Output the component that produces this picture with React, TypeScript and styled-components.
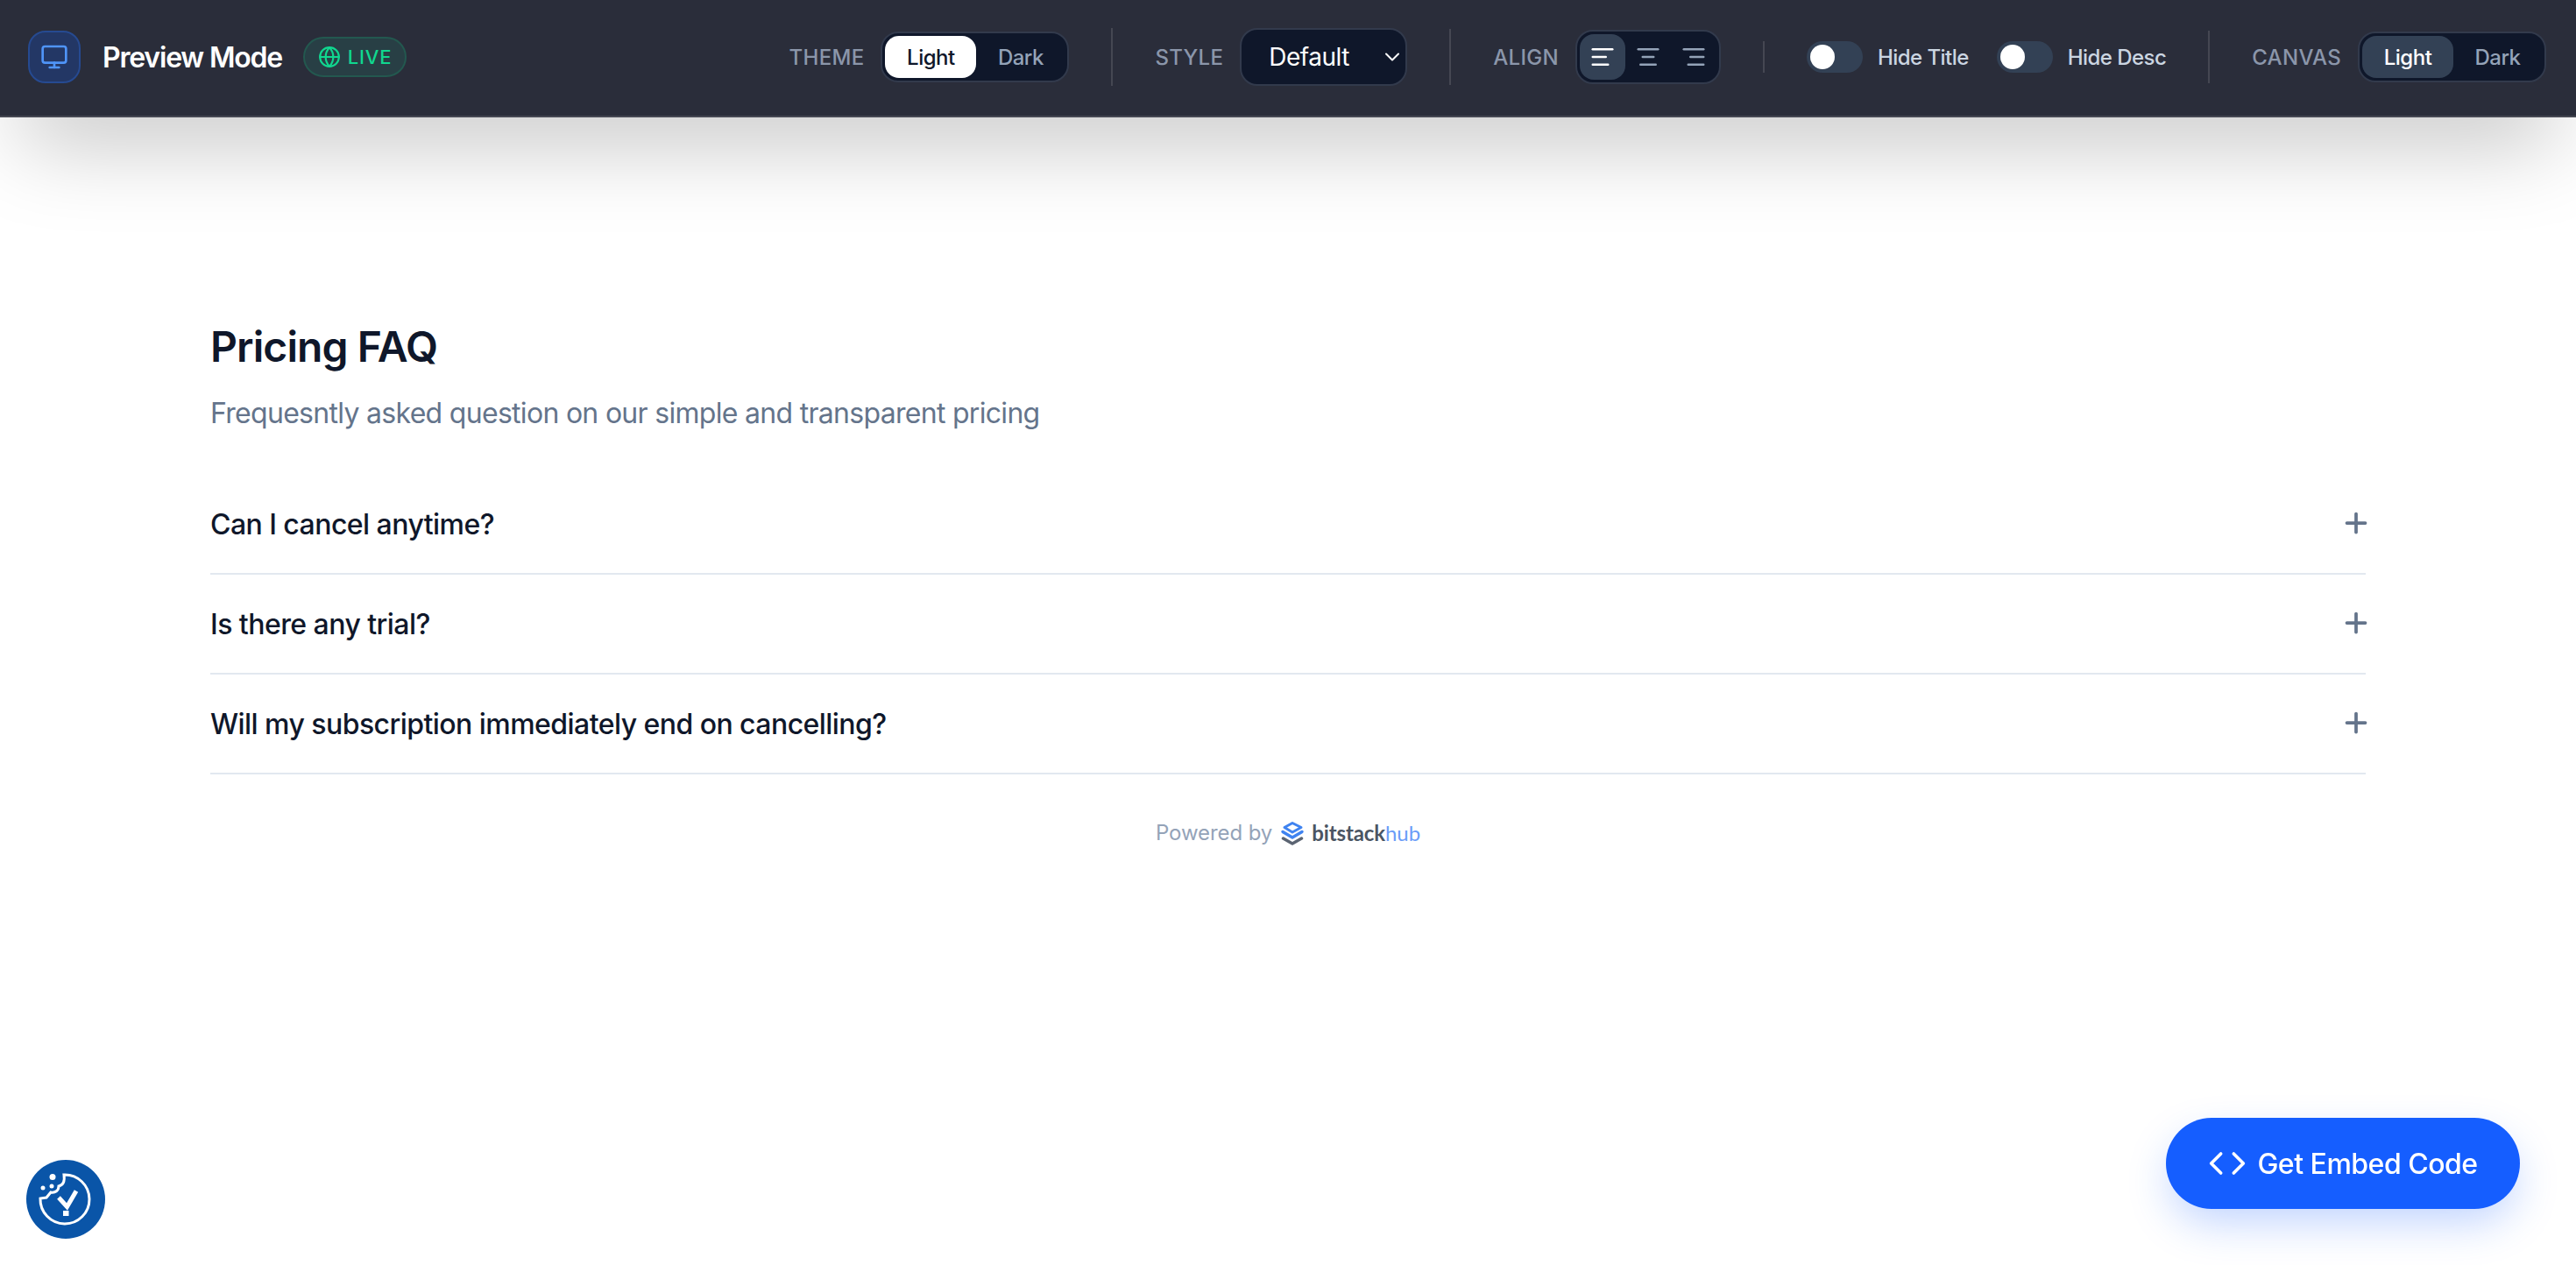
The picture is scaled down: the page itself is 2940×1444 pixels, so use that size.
import React from "react";
import styled, { createGlobalStyle } from "styled-components";
import { AlignCenter, AlignLeft, AlignRight, ChevronDown, Code, Globe, Monitor, Plus } from "lucide-react";

const Global = createGlobalStyle`
  * { box-sizing: border-box; }
  html, body { margin: 0; padding: 0; background: #fff; }
  body { font-family: Inter, "Liberation Sans", sans-serif; overflow: hidden; }
`;

const Page = styled.div`
  min-height: 1444px;
  display: flex;
  flex-direction: column;
  background: #fff;
`;

const Header = styled.header`
  height: 134px;
  flex: none;
  display: flex;
  align-items: center;
  justify-content: space-between;
  padding: 0 34px 2px 32px;
  background: #2a2d3a;
  border-bottom: 2px solid #454752;
  box-shadow: 0 50px 100px -24px rgba(0, 0, 0, 0.25);
`;

const Brand = styled.div`
  display: flex;
  align-items: center;
`;

const BrandIcon = styled.div`
  width: 60px;
  height: 60px;
  border-radius: 20px;
  background: #233765;
  border: 2px solid #264a91;
  display: flex;
  align-items: center;
  justify-content: center;
  color: #4f94f8;
  margin-right: 25px;
`;

const BrandTitle = styled.h1`
  margin: 0 24px 0 0;
  font-size: 32px;
  font-weight: 600;
  letter-spacing: -1.2px;
  color: #fff;
`;

const LiveBadge = styled.div`
  height: 46px;
  width: 118px;
  display: flex;
  align-items: center;
  justify-content: center;
  gap: 8px;
  border-radius: 23px;
  background: #283f45;
  border: 2px solid #23584f;
  color: #10d78f;
  font-size: 22px;
  font-weight: 500;
  letter-spacing: 0.8px;
`;

const Controls = styled.div`
  display: flex;
  align-items: center;
  gap: 48px;
`;

const Group = styled.div`
  display: flex;
  align-items: center;
  gap: 19px;
`;

const Divider = styled.div<{ $h: number }>`
  width: 2px;
  height: ${(p) => p.$h}px;
  background: #454752;
`;

const Label = styled.span`
  font-size: 24px;
  font-weight: 500;
  letter-spacing: 0.3px;
  color: #8b96aa;
  text-transform: uppercase;
`;

const Segmented = styled.div`
  display: flex;
  padding: 3px;
  border-radius: 20px;
  background: #0f172a;
  border: 2px solid #323a4c;
`;

const SegButton = styled.button<{ $active: "white" | "slate" | false; $w: number; $h: number }>`
  width: ${(p) => p.$w}px;
  height: ${(p) => p.$h}px;
  padding: 0;
  border: 0;
  border-radius: 16px;
  display: flex;
  align-items: center;
  justify-content: center;
  font: 500 24px Inter, sans-serif;
  letter-spacing: -0.5px;
  background: ${(p) => (p.$active === "white" ? "#fff" : p.$active === "slate" ? "#334155" : "transparent")};
  color: ${(p) => (p.$active === "white" ? "#0f172a" : p.$active === "slate" ? "#fff" : "#94a3b8")};
`;

const SelectBox = styled.div`
  width: 191px;
  height: 66px;
  border-radius: 20px;
  background: #0f172a;
  border: 2px solid #323a4c;
  display: flex;
  align-items: center;
  justify-content: space-between;
  padding: 0 1px 0 31px;
  color: #fff;
  font-size: 28px;
  letter-spacing: -0.5px;
`;

const ToggleGroup = styled.div`
  display: flex;
  align-items: center;
  gap: 32px;
`;

const ToggleItem = styled.div`
  display: flex;
  align-items: center;
  gap: 17px;
`;

const Track = styled.div`
  width: 64px;
  height: 36px;
  border-radius: 18px;
  background: #334155;
  display: flex;
  align-items: center;
  padding: 0 4px;
`;

const Knob = styled.div`
  width: 28px;
  height: 28px;
  border-radius: 50%;
  background: #fff;
`;

const ToggleText = styled.span`
  font-size: 24px;
  font-weight: 500;
  letter-spacing: -0.55px;
  color: #cbd5e1;
`;

const Main = styled.main`
  flex: 1;
  padding: 232px 240px 0;
`;

const Title = styled.h2`
  margin: 0;
  font-size: 48px;
  line-height: 60px;
  font-weight: 600;
  letter-spacing: -0.9px;
  color: #0f172a;
`;

const Subtitle = styled.p`
  margin: 22px 0 46px;
  font-size: 32px;
  line-height: 48px;
  letter-spacing: -0.7px;
  color: #64748b;
`;

const Item = styled.div`
  height: 114px;
  border-bottom: 2px solid #e2e8f0;
  display: flex;
  align-items: center;
  justify-content: space-between;
  font-size: 32px;
  font-weight: 450;
  letter-spacing: -0.55px;
  color: #0f172a;
`;

const PlusMark = styled(Plus)`
  margin-right: -7px;
  margin-bottom: 3px;
  color: #64748b;
`;

const Powered = styled.div`
  margin-top: 52px;
  display: flex;
  align-items: center;
  justify-content: center;
  font-size: 24px;
  letter-spacing: -0.1px;
  color: #94a3b8;
`;

const StackLogo = styled.svg`
  margin: 0 8px 0 9px;
`;

const BrandName = styled.span`
  font-family: Lato, Inter, sans-serif;
  font-size: 24px;
  font-weight: 700;
  color: #4b5563;
`;

const BrandHub = styled.span`
  font-weight: 400;
  color: #6b9cf8;
`;

const EmbedButton = styled.button`
  position: fixed;
  left: 2472px;
  top: 1276px;
  width: 404px;
  height: 104px;
  border: 0;
  border-radius: 52px;
  background: #155eff;
  color: #fff;
  display: flex;
  align-items: center;
  justify-content: center;
  gap: 12px;
  font: 500 32px Inter, sans-serif;
  letter-spacing: -0.5px;
  box-shadow: 0 20px 50px -6px rgba(21, 94, 255, 0.28);
`;

const CookieBadge = styled.div`
  position: fixed;
  left: 30px;
  top: 1324px;
  width: 90px;
  height: 90px;
  border-radius: 50%;
  background: #0a55a8;
`;

const segments = (active: "white" | "slate") => (
  <Segmented>
    <SegButton $active={active} $w={104} $h={48}>Light</SegButton>
    <SegButton $active={false} $w={101} $h={48}>Dark</SegButton>
  </Segmented>
);

const faqs = ["Can I cancel anytime?", "Is there any trial?", "Will my subscription immediately end on cancelling?"];

export default function App() {
  return (
    <Page>
      <Global />
      <Header>
        <Brand>
          <BrandIcon><Monitor size={32} strokeWidth={2} /></BrandIcon>
          <BrandTitle>Preview Mode</BrandTitle>
          <LiveBadge><Globe size={26} strokeWidth={2} />LIVE</LiveBadge>
        </Brand>
        <Controls>
          <Group>
            <Label>Theme</Label>
            {segments("white")}
          </Group>
          <Divider $h={66} />
          <Group>
            <Label>Style</Label>
            <SelectBox>Default<ChevronDown size={28} strokeWidth={1.7} color="#fff" /></SelectBox>
          </Group>
          <Divider $h={64} />
          <Group>
            <Label>Align</Label>
            <Segmented>
              <SegButton $active="slate" $w={52} $h={52}><AlignLeft size={30} /></SegButton>
              <SegButton $active={false} $w={52} $h={52}><AlignCenter size={30} /></SegButton>
              <SegButton $active={false} $w={52} $h={52}><AlignRight size={30} /></SegButton>
            </Segmented>
          </Group>
          <Divider $h={36} />
          <ToggleGroup>
            <ToggleItem><Track><Knob /></Track><ToggleText>Hide Title</ToggleText></ToggleItem>
            <ToggleItem><Track><Knob /></Track><ToggleText>Hide Desc</ToggleText></ToggleItem>
          </ToggleGroup>
          <Divider $h={60} />
          <Group>
            <Label>Canvas</Label>
            {segments("slate")}
          </Group>
        </Controls>
      </Header>
      <Main>
        <Title>Pricing FAQ</Title>
        <Subtitle>Frequesntly asked question on our simple and transparent pricing</Subtitle>
        {faqs.map((q) => (
          <Item key={q}>{q}<PlusMark size={36} strokeWidth={2.5} /></Item>
        ))}
        <Powered>
          Powered by
          <StackLogo width="28" height="28" viewBox="0 0 28 28" fill="none" strokeLinejoin="round" strokeLinecap="round">
            <path d="M14 2.500 24 7.500 14 13 5 7.500z" stroke="#3f83f0" strokeWidth="3" />
            <path d="M3 12.500 14 19 25 12.500" stroke="#3f83f0" strokeWidth="3.500" />
            <path d="M3.500 20 14 26 24.500 20" stroke="#5b6472" strokeWidth="3.500" />
          </StackLogo>
          <BrandName>bitstack<BrandHub>hub</BrandHub></BrandName>
        </Powered>
      </Main>
      <CookieBadge>
        <svg width="90" height="90" viewBox="0 0 90 90" fill="none">
          <path d="M43 17a28 28 0 1 1-27 27l7-1 5-6c5 1 9-2 9-7 5-1 7-6 6-13z" stroke="#fff" strokeWidth="3" />
          <circle cx="30" cy="19.500" r="3.500" fill="#fff" />
          <circle cx="19" cy="32" r="2.500" fill="#fff" />
          <circle cx="29" cy="30" r="2.500" fill="#fff" />
          <path d="M37 43l9.500 10.500 10.500-18" stroke="#fff" strokeWidth="5" />
          <rect x="42" y="58" width="6.500" height="6" fill="#fff" />
        </svg>
      </CookieBadge>
      <EmbedButton><Code size={44} strokeWidth={2} />Get Embed Code</EmbedButton>
    </Page>
  );
}
